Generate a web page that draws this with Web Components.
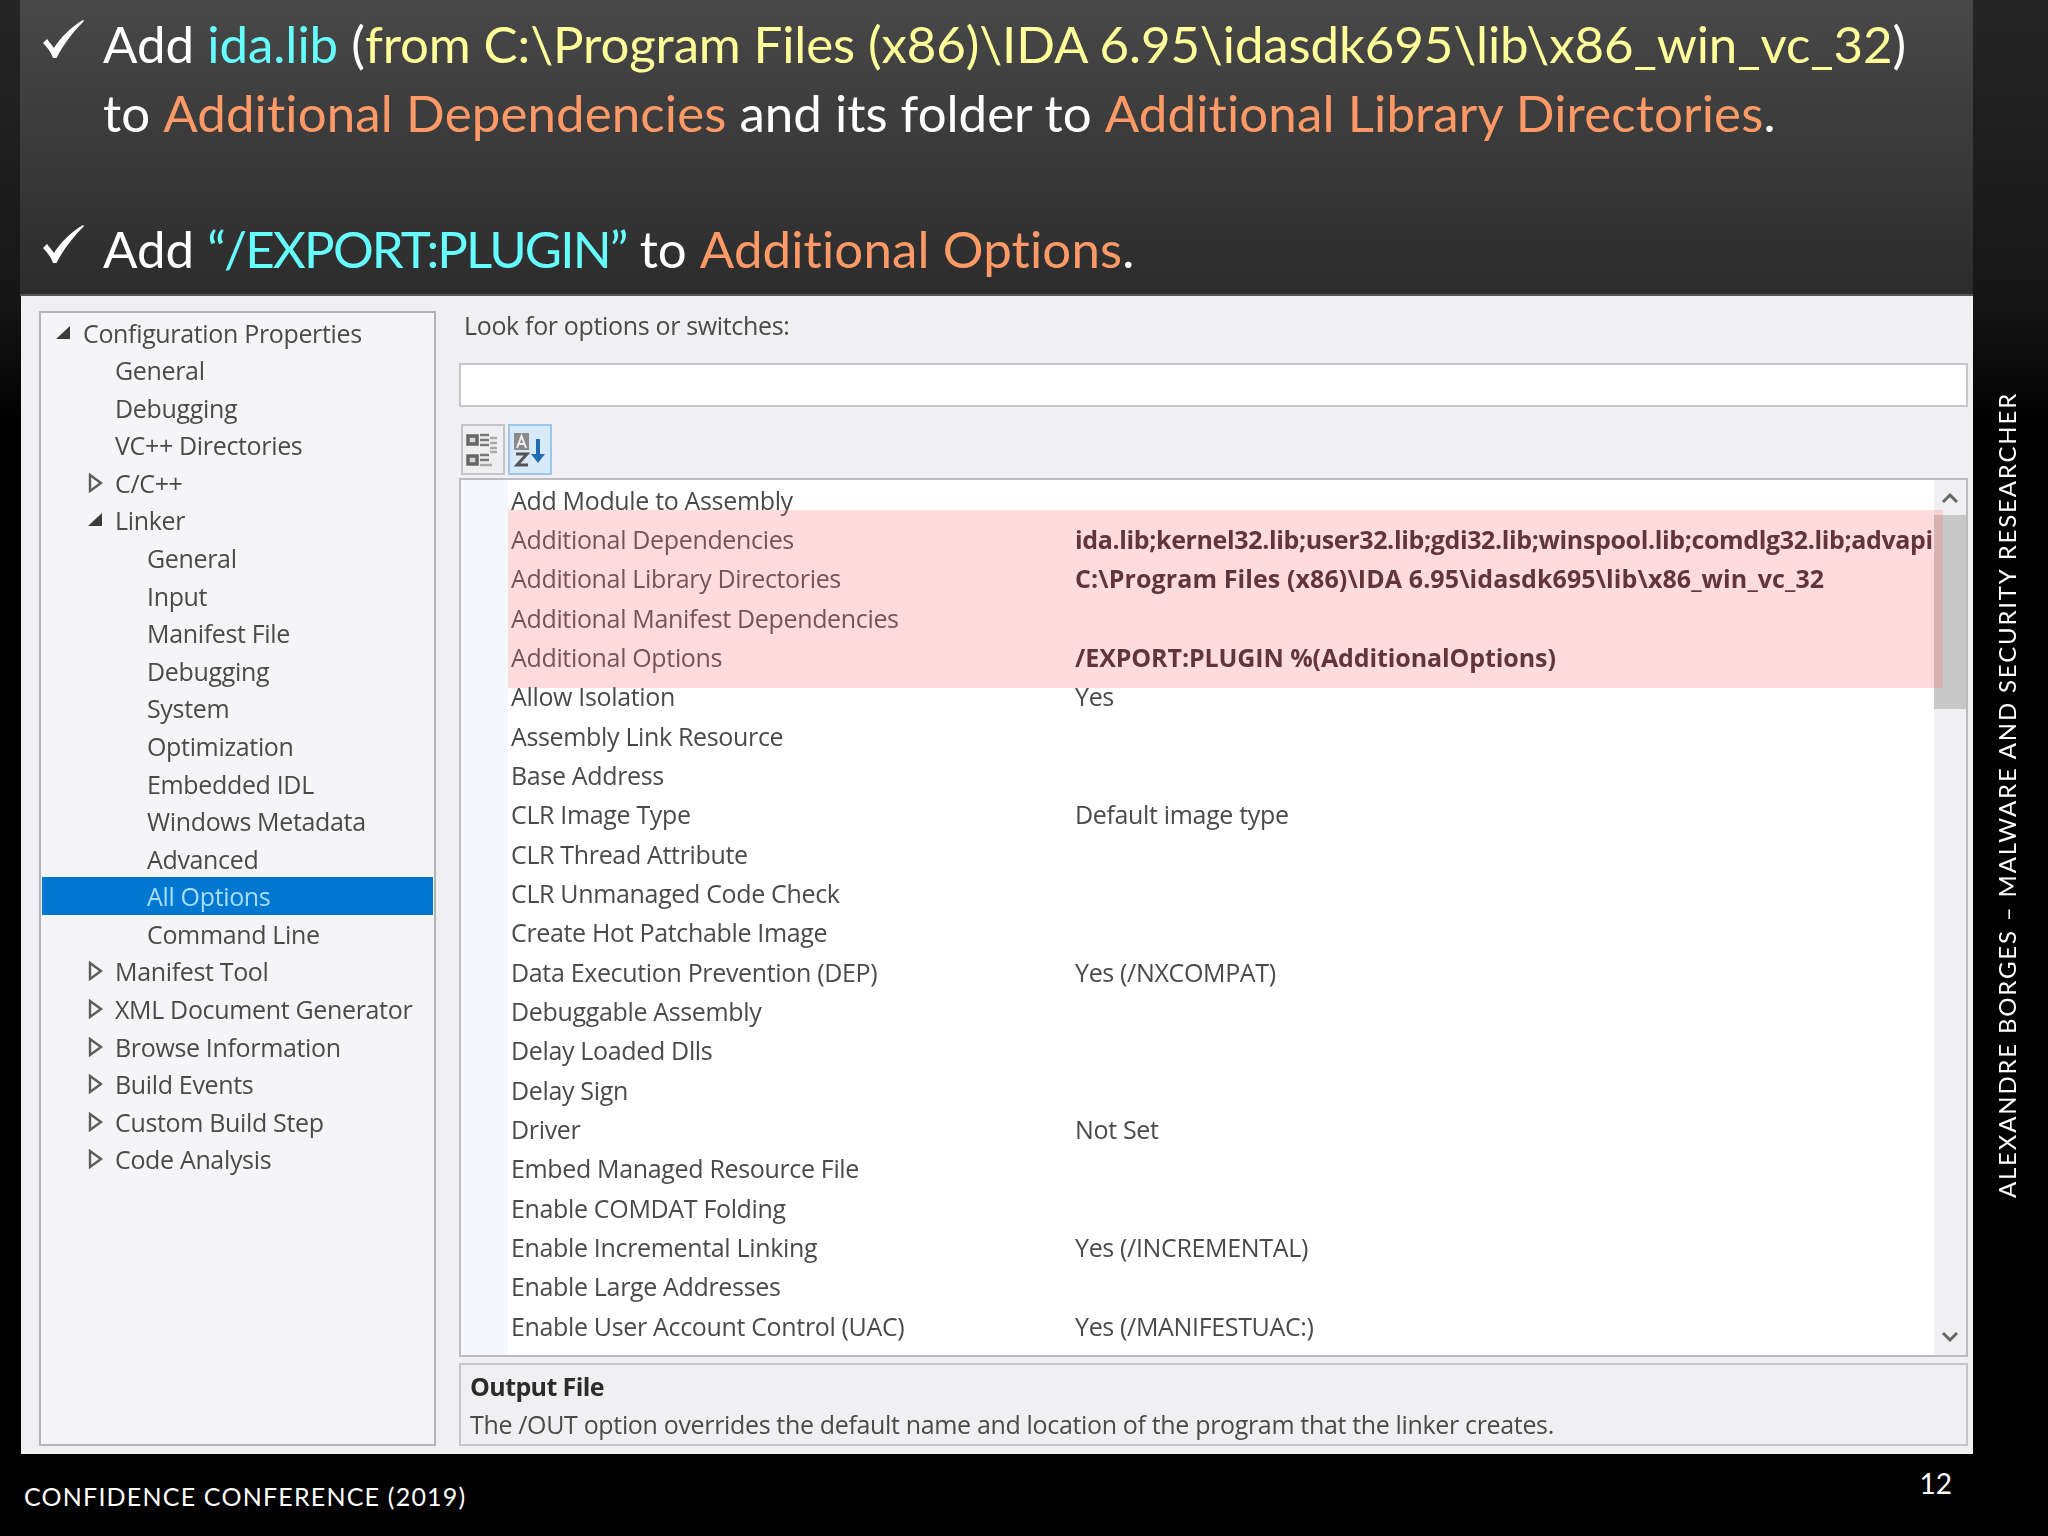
<!DOCTYPE html>
<html lang="en">

<head>
    <meta charset="UTF-8">
    <title>Slide 12</title>
    <style>
        html, body { margin: 0; padding: 0; background: #000; }
        .cy { color: #66ffff; }
        .ye { color: #ffff99; letter-spacing: -.12px; }
        .or { color: #ff9966; letter-spacing: .12px; }
        .qt { color: #66ffff; letter-spacing: -1.83px; }
    </style>
</head>

<body>
    <template id="slide-template">
        <style>
            :host {
                display: grid;
                width: 2048px;
                height: 1536px;
                overflow: hidden;
                grid-template-columns: 20px 1953px 75px;
                grid-template-rows: 296px 1158px 82px;
                background: linear-gradient(#262626 0, #161616 300px, #000 430px);
                font-family: "Lato", sans-serif;
            }
            .head { grid-column: 2; grid-row: 1; }
            .body { grid-column: 2; grid-row: 2; display: grid; }
            .rail { grid-column: 3; grid-row: 1 / 3; display: flex; justify-content: center; align-items: flex-end; padding: 0 8px 256px 0; }
            .foot { grid-column: 1 / 4; grid-row: 3; }
        </style>
        <div class="head"><slot name="head"></slot></div>
        <div class="body"><slot></slot></div>
        <div class="rail"><slot name="rail"></slot></div>
        <div class="foot"><slot name="foot"></slot></div>
    </template>

    <template id="head-template">
        <style>
            :host {
                display: block;
                box-sizing: border-box;
                height: 296px;
                padding: 10px 0 0 23px;
                background: linear-gradient(#484848 0, #2c2c2c 100%);
                border-bottom: 2px solid #55555a;
            }
        </style>
        <slot></slot>
    </template>

    <template id="check-template">
        <style>
            :host {
                display: grid;
                grid-template-columns: 60px 1fr;
                color: #fff;
                font: 400 51px/68.5px "Lato", sans-serif;
                white-space: nowrap;
            }
            svg { width: 41px; height: 38px; margin-top: 10px; }
            :host([gap]) { margin-top: 68px; }
        </style>
        <svg viewBox="0 0 41 38"><path fill="#fff" d="M0 23 L4 19 L11 28 C17 18 28 7 40 0 L41 1 C30 12 20 25 13.5 38 L10 38 C8 32 4 27 0 23 Z"/></svg>
        <div><slot></slot></div>
    </template>

    <template id="panel-template">
        <style>
            :host {
                display: grid;
                grid-template-columns: 397px 1fr;
                column-gap: 23px;
                box-sizing: border-box;
                margin-left: 1px;
                padding: 15px 5px 8px 18px;
                background: #f0f0f2;
                filter: blur(.7px);
                color: #4a4a4a;
                font: 400 25px "Open Sans", sans-serif;
            }
            .right { display: flex; flex-direction: column; min-width: 0; }
        </style>
        <slot name="tree"></slot>
        <div class="right"><slot></slot></div>
    </template>

    <template id="tree-template">
        <style>
            :host {
                display: block;
                box-sizing: border-box;
                padding: .8px 1px;
                background: #f5f5f7;
                border: 2px solid #b4b4b8;
            }
        </style>
        <slot></slot>
    </template>

    <template id="tree-item-template">
        <style>
            :host {
                display: flex;
                align-items: center;
                height: 37.58px;
                white-space: nowrap;
                letter-spacing: -.34px;
            }
            :host([selected]) { background: #0078d0; color: #a9dcff; }
            .arrow { width: 20px; height: 20px; margin-right: 12px; flex: none; }
            .arrow svg { display: block; width: 20px; height: 20px; }
            :host([level="0"]) .arrow { margin-left: 9px; }
            :host([level="1"]) .arrow { margin-left: 41px; }
            :host([level="2"]) .arrow { margin-left: 73px; }
        </style>
        <span class="arrow"></span><slot></slot>
    </template>

    <template id="search-template">
        <style>
            :host { display: block; }
            .label { height: 52px; padding-left: 5px; box-sizing: border-box; line-height: 28px; letter-spacing: -.34px; }
            .input { height: 44px; box-sizing: border-box; background: #fff; border: 2px solid #c6c6ca; }
            .tools { display: flex; gap: 3px; height: 51px; margin: 17px 0 3px 2px; }
        </style>
        <div class="label"><slot></slot></div>
        <div class="input"></div>
        <div class="tools"><slot name="tools"></slot></div>
    </template>

    <template id="tool-template">
        <style>
            :host {
                display: flex;
                align-items: center;
                justify-content: center;
                box-sizing: border-box;
                width: 44px;
                height: 51px;
                border: 2px solid #c4c4c8;
                background: #efeff1;
            }
            :host([active]) { border-color: #9cc6ea; background: #d8eafa; }
        </style>
        <slot></slot>
    </template>

    <template id="grid-template">
        <style>
            :host {
                display: block;
                position: relative;
                flex: 1;
                min-height: 0;
                box-sizing: border-box;
                border: 2px solid #bcbcc0;
                background: linear-gradient(90deg, #f4f7fc 47px, #fff 47px);
                overflow: hidden;
            }
            .rows { margin-right: 34px; }
            .bar {
                position: absolute;
                top: 0; right: 0; bottom: 0;
                width: 32px;
                background: #f0f0f2;
            }
            .thumb { position: absolute; top: 35px; left: 0; right: 0; height: 194px; background: #c8c8c8; }
            .bar svg { position: absolute; left: 7px; width: 18px; height: 12px; }
            .up { top: 12px; }
            .down { bottom: 12px; }
            .mark {
                position: absolute;
                left: 47px; top: 30px;
                width: 1435px; height: 178px;
                background: rgba(255, 115, 115, .25);
            }
        </style>
        <div class="rows"><slot></slot></div>
        <div class="bar">
            <div class="thumb"></div>
            <svg class="up" viewBox="0 0 18 12"><path d="M2 10 L9 3 L16 10" fill="none" stroke="#666" stroke-width="3"/></svg>
            <svg class="down" viewBox="0 0 18 12"><path d="M2 2 L9 9 L16 2" fill="none" stroke="#666" stroke-width="3"/></svg>
        </div>
        <div class="mark"></div>
    </template>

    <template id="row-template">
        <style>
            :host {
                display: grid;
                grid-template-columns: 564px 1fr;
                align-items: center;
                height: 39.33px;
                padding-left: 50px;
                white-space: nowrap;
                letter-spacing: -.34px;
            }
            .val { overflow: hidden; }
            :host([strong]) .val { font-weight: 700; color: #2e2226; letter-spacing: var(--vs, 0); }
        </style>
        <div class="name"><slot></slot></div>
        <div class="val"></div>
    </template>

    <template id="desc-template">
        <style>
            :host {
                display: block;
                box-sizing: border-box;
                height: 83px;
                margin-top: 6px;
                padding: 3px 9px 0;
                border: 2px solid #c6c6ca;
                line-height: 37.5px;
                white-space: nowrap;
                letter-spacing: -.34px;
            }
            ::slotted(strong) { display: block; color: #2c2c2c; letter-spacing: -.6px; }
        </style>
        <slot></slot>
    </template>

    <template id="rail-template">
        <style>
            :host {
                display: block;
                writing-mode: vertical-rl;
                transform: rotate(180deg);
                color: #fff;
                font: 400 24px "Lato", sans-serif;
                letter-spacing: 1.82px;
                white-space: nowrap;
            }
        </style>
        <slot></slot>
    </template>

    <template id="foot-template">
        <style>
            :host {
                display: flex;
                justify-content: space-between;
                height: 82px;
                box-sizing: border-box;
                padding: 26px 96px 0 24px;
                color: #fff;
                font: 400 25px/32px "Lato", sans-serif;
                letter-spacing: 1.2px;
                white-space: nowrap;
            }
            .num { margin-top: -13px; letter-spacing: 0; font-size: 28px; }
        </style>
        <span><slot></slot></span>
        <span class="num"><slot name="num"></slot></span>
    </template>

    <slide-deck>
        <slide-head slot="head">
            <check-line>Add <span class="cy">ida.lib</span> (<span class="ye">from C:\Program Files (x86)\IDA 6.95\idasdk695\lib\x86_win_vc_32</span>)<br>to <span class="or">Additional Dependencies</span> and its folder to <span class="or">Additional Library Directories</span>.</check-line>
            <check-line gap>Add <span class="qt">“/EXPORT:PLUGIN”</span> to <span class="or">Additional Options</span>.</check-line>
        </slide-head>

        <linker-panel>
            <tree-pane slot="tree">
                <tree-item level="0" arrow="open">Configuration Properties</tree-item>
                <tree-item level="1">General</tree-item>
                <tree-item level="1">Debugging</tree-item>
                <tree-item level="1">VC++ Directories</tree-item>
                <tree-item level="1" arrow="closed">C/C++</tree-item>
                <tree-item level="1" arrow="open">Linker</tree-item>
                <tree-item level="2">General</tree-item>
                <tree-item level="2">Input</tree-item>
                <tree-item level="2">Manifest File</tree-item>
                <tree-item level="2">Debugging</tree-item>
                <tree-item level="2">System</tree-item>
                <tree-item level="2">Optimization</tree-item>
                <tree-item level="2">Embedded IDL</tree-item>
                <tree-item level="2">Windows Metadata</tree-item>
                <tree-item level="2">Advanced</tree-item>
                <tree-item level="2" selected>All Options</tree-item>
                <tree-item level="2">Command Line</tree-item>
                <tree-item level="1" arrow="closed">Manifest Tool</tree-item>
                <tree-item level="1" arrow="closed">XML Document Generator</tree-item>
                <tree-item level="1" arrow="closed">Browse Information</tree-item>
                <tree-item level="1" arrow="closed">Build Events</tree-item>
                <tree-item level="1" arrow="closed">Custom Build Step</tree-item>
                <tree-item level="1" arrow="closed">Code Analysis</tree-item>
            </tree-pane>

            <search-box>
                Look for options or switches:
                <tool-button slot="tools">
                    <svg width="34" height="36" viewBox="0 0 34 36">
                        <g fill="#d8d8d8" stroke="#666" stroke-width="3.5"><rect x="2" y="4" width="9" height="8"/><rect x="2" y="24" width="9" height="8"/></g>
                        <g stroke="#777" stroke-width="2.5"><path d="M14 3h9M14 8h9M14 13h9M14 23h9M14 28h9"/></g>
                        <g stroke="#aaa" stroke-width="2.5"><path d="M24 6h7M24 11h7M24 16h7M24 20h7M14 33h12"/></g>
                    </svg>
                </tool-button>
                <tool-button slot="tools" active>
                    <svg width="34" height="36" viewBox="0 0 34 36">
                        <rect x="1" y="1" width="15" height="17" fill="#8a8a8a"/>
                        <path d="M4 16 L8.5 4 L13 16 M6 12 H11" fill="none" stroke="#eee" stroke-width="2"/>
                        <path d="M3 22 H14 L4 33 H15" fill="none" stroke="#555" stroke-width="3"/>
                        <path d="M25 7 V28" stroke="#1f6db5" stroke-width="4"/>
                        <path d="M18 22 H32 L25 31 Z" fill="#1f6db5"/>
                    </svg>
                </tool-button>
            </search-box>

            <prop-grid>
                <prop-row>Add Module to Assembly</prop-row>
                <prop-row strong style="--vs:-.36px" value="ida.lib;kernel32.lib;user32.lib;gdi32.lib;winspool.lib;comdlg32.lib;advapi32.lib">Additional Dependencies</prop-row>
                <prop-row strong style="--vs:.1px" value="C:\Program Files (x86)\IDA 6.95\idasdk695\lib\x86_win_vc_32">Additional Library Directories</prop-row>
                <prop-row>Additional Manifest Dependencies</prop-row>
                <prop-row strong style="--vs:-.1px" value="/EXPORT:PLUGIN %(AdditionalOptions)">Additional Options</prop-row>
                <prop-row value="Yes">Allow Isolation</prop-row>
                <prop-row>Assembly Link Resource</prop-row>
                <prop-row>Base Address</prop-row>
                <prop-row value="Default image type">CLR Image Type</prop-row>
                <prop-row>CLR Thread Attribute</prop-row>
                <prop-row>CLR Unmanaged Code Check</prop-row>
                <prop-row>Create Hot Patchable Image</prop-row>
                <prop-row value="Yes (/NXCOMPAT)">Data Execution Prevention (DEP)</prop-row>
                <prop-row>Debuggable Assembly</prop-row>
                <prop-row>Delay Loaded Dlls</prop-row>
                <prop-row>Delay Sign</prop-row>
                <prop-row value="Not Set">Driver</prop-row>
                <prop-row>Embed Managed Resource File</prop-row>
                <prop-row>Enable COMDAT Folding</prop-row>
                <prop-row value="Yes (/INCREMENTAL)">Enable Incremental Linking</prop-row>
                <prop-row>Enable Large Addresses</prop-row>
                <prop-row value="Yes (/MANIFESTUAC:)">Enable User Account Control (UAC)</prop-row>
            </prop-grid>

            <desc-box><strong>Output File</strong>The /OUT option overrides the default name and location of the program that the linker creates.</desc-box>
        </linker-panel>

        <side-rail slot="rail">ALEXANDRE BORGES – MALWARE AND SECURITY RESEARCHER</side-rail>
        <slide-foot slot="foot">CONFIDENCE CONFERENCE (2019)<span slot="num">12</span></slide-foot>
    </slide-deck>

    <script type="module">
        // each element just clones its template, a few read attributes after that
        class Base extends HTMLElement {
            constructor() {
                super();
                this.attachShadow({ mode: 'open' });
                const tmp = document.getElementById(this.constructor.tpl);
                this.shadowRoot.appendChild(tmp.content.cloneNode(true));
            }
        }

        const simple = {
            'slide-deck': 'slide-template',
            'slide-head': 'head-template',
            'check-line': 'check-template',
            'linker-panel': 'panel-template',
            'tree-pane': 'tree-template',
            'search-box': 'search-template',
            'tool-button': 'tool-template',
            'prop-grid': 'grid-template',
            'desc-box': 'desc-template',
            'side-rail': 'rail-template',
            'slide-foot': 'foot-template',
        };
        for (const name in simple) {
            customElements.define(name, class extends Base {
                static tpl = simple[name];
            });
        }

        const arrows = {
            open: '<svg viewBox="0 0 20 20"><path d="M19 3 V16 H5 Z" fill="#3c3c3c"/></svg>',
            closed: '<svg viewBox="0 0 20 20"><path d="M7 2 L18 10 L7 18 Z" fill="none" stroke="#5c5c5c" stroke-width="2.4"/></svg>',
        };

        class TreeItem extends Base {
            static tpl = 'tree-item-template';
            connectedCallback() {
                const arrow = this.getAttribute('arrow');
                if (arrow) this.shadowRoot.querySelector('.arrow').innerHTML = arrows[arrow];
            }
        }
        customElements.define('tree-item', TreeItem);

        class PropRow extends Base {
            static tpl = 'row-template';
            connectedCallback() {
                this.shadowRoot.querySelector('.val').textContent = this.getAttribute('value') || '';
            }
        }
        customElements.define('prop-row', PropRow);
    </script>
</body>

</html>
